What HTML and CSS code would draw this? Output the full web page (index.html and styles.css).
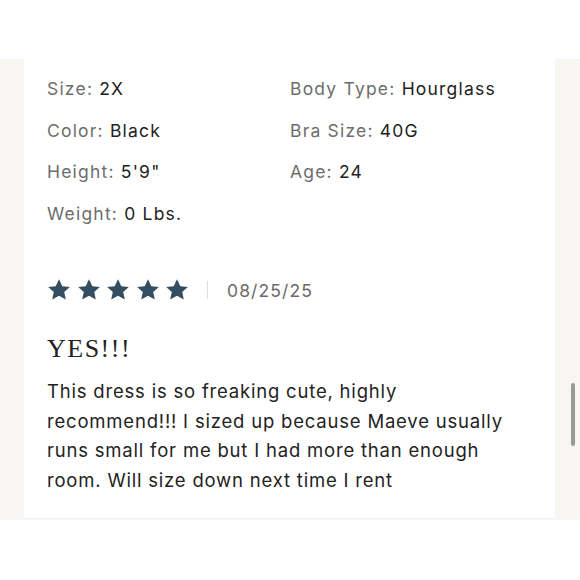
FILE: index.html
```html
<!DOCTYPE html>
<html>
<head>
<meta charset="utf-8">
<link rel="stylesheet" href="styles.css">
</head>
<body>
<div class="top"></div>
<div class="band">
  <div class="card">
    <div class="specs">
      <div class="spec"><span class="label">Size:</span> <span class="val">2X</span></div>
      <div class="spec"><span class="label">Body Type:</span> <span class="val">Hourglass</span></div>
      <div class="spec"><span class="label">Color:</span> <span class="val">Black</span></div>
      <div class="spec"><span class="label">Bra Size:</span> <span class="val">40G</span></div>
      <div class="spec"><span class="label">Height:</span> <span class="val">5'9"</span></div>
      <div class="spec"><span class="label">Age:</span> <span class="val">24</span></div>
      <div class="spec"><span class="label">Weight:</span> <span class="val">0 Lbs.</span></div>
    </div>
    <div class="meta">
      <div class="stars">
        <svg viewBox="0 0 24 24" class="star"><path d="M12 1.2l3.3 7 7.5.8-5.6 5.1 1.6 7.5L12 17.8l-6.8 3.8 1.6-7.5L1.2 9l7.5-.8z"/></svg>
        <svg viewBox="0 0 24 24" class="star"><path d="M12 1.2l3.3 7 7.5.8-5.6 5.1 1.6 7.5L12 17.8l-6.8 3.8 1.6-7.5L1.2 9l7.5-.8z"/></svg>
        <svg viewBox="0 0 24 24" class="star"><path d="M12 1.2l3.3 7 7.5.8-5.6 5.1 1.6 7.5L12 17.8l-6.8 3.8 1.6-7.5L1.2 9l7.5-.8z"/></svg>
        <svg viewBox="0 0 24 24" class="star"><path d="M12 1.2l3.3 7 7.5.8-5.6 5.1 1.6 7.5L12 17.8l-6.8 3.8 1.6-7.5L1.2 9l7.5-.8z"/></svg>
        <svg viewBox="0 0 24 24" class="star"><path d="M12 1.2l3.3 7 7.5.8-5.6 5.1 1.6 7.5L12 17.8l-6.8 3.8 1.6-7.5L1.2 9l7.5-.8z"/></svg>
      </div>
      <span class="sep"></span>
      <span class="date">08/25/25</span>
    </div>
    <h2 class="title">YES!!!</h2>
    <p class="body">This dress is so freaking cute, highly recommend!!! I sized up because Maeve usually runs small for me but I had more than enough room. Will size down next time I rent</p>
  </div>
</div>
<div class="scrollbar"></div>
</body>
</html>
```
FILE: styles.css
```css
html, body {
  margin: 0;
  padding: 0;
  background: #ffffff;
}
body {
  font-family: Inter, "Liberation Sans", sans-serif;
  width: 580px;
  height: 580px;
  overflow: hidden;
  position: relative;
}
.top {
  height: 59px;
}
.band {
  background: #f7f6f2;
  padding: 0 25px 1px 24px;
}
.card {
  background: #ffffff;
  padding: 16px 23px 23px 23px;
  border-bottom: 1px solid #f0efec;
}
.specs {
  display: grid;
  grid-template-columns: 243px 1fr;
}
.spec {
  height: 41.5px;
  line-height: 28px;
  font-size: 17.5px;
  letter-spacing: 1.2px;
}
.label {
  color: #6d6d6d;
}
.val {
  color: #222222;
}
.meta {
  display: flex;
  align-items: center;
  margin-top: 34px;
  height: 30px;
}
.stars {
  display: flex;
  gap: 5.5px;
}
.star {
  width: 24px;
  height: 24px;
  fill: #344d61;
}
.sep {
  width: 1px;
  height: 18px;
  background: #dddddd;
  margin: 0 19px 0 18px;
}
.date {
  font-size: 17.5px;
  color: #6a6a6a;
  letter-spacing: 1.1px;
}
.title {
  font-family: "Liberation Serif", serif;
  font-weight: normal;
  font-size: 26px;
  color: #222;
  margin: 28px 0 0 0;
  line-height: 32px;
  letter-spacing: 1.5px;
}
.body {
  margin: 12px 0 0 0;
  font-size: 18.5px;
  line-height: 29.6px;
  color: #232323;
  letter-spacing: 0.8px;
  width: 480px;
}
.scrollbar {
  position: absolute;
  left: 571px;
  top: 383px;
  width: 4px;
  height: 63px;
  border-radius: 2px;
  background: #9a9a9a;
}
```
